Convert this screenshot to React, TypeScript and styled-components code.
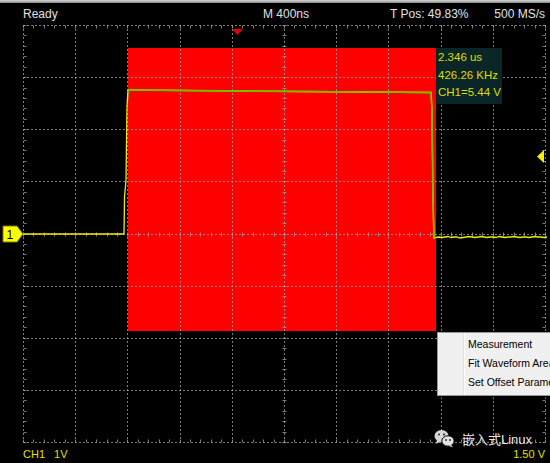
import React from 'react';
import styled, { createGlobalStyle } from 'styled-components';

const GlobalStyle = createGlobalStyle`
  html, body {
    margin: 0;
    padding: 0;
    background: #000;
  }
  body {
    font-family: "Liberation Sans", Arial, sans-serif;
  }
`;

const Screen = styled.div`
  position: relative;
  width: 550px;
  height: 463px;
  overflow: hidden;
  background: #000;
  display: flex;
  flex-direction: column;
`;

const TopEdge = styled.div`
  height: 3px;
  background: linear-gradient(#d8d8d8, #8a8a8a);
`;

const TopBar = styled.div`
  height: 21px;
  display: grid;
  grid-template-columns: 240px 127px 1fr auto;
  align-items: center;
  padding: 0 5px 0 23px;
  color: #e2e2e2;
  font-size: 12px;
  white-space: nowrap;
`;

const Plot = styled.svg`
  display: block;
  width: 550px;
  height: 420px;
  flex: none;
`;

const BottomBar = styled.div`
  height: 19px;
  display: flex;
  align-items: center;
  justify-content: space-between;
  padding: 0 5px 0 23px;
  color: #e0e000;
  font-size: 11px;
`;

const Scale = styled.div`
  display: flex;
  gap: 9px;
`;

const MeasureBox = styled.div`
  position: absolute;
  left: 436px;
  top: 48px;
  width: 64px;
  height: 55px;
  padding: 1px 0 0 2px;
  background: #0b2626;
  color: #dede00;
  font-size: 11.5px;
  line-height: 17.5px;
  white-space: nowrap;
`;

const ContextMenu = styled.div`
  position: absolute;
  left: 437px;
  top: 332px;
  width: 130px;
  height: 62px;
  display: flex;
  background: #f0f0f0;
  border: 1px solid #979797;
  box-shadow: 2px 2px 3px rgba(0, 0, 0, 0.4);
`;

const Gutter = styled.div`
  flex: none;
  width: 25px;
  border-right: 1px solid #e0e0e0;
  box-shadow: 1px 0 0 #fff;
`;

const MenuList = styled.ul`
  list-style: none;
  margin: 0;
  padding: 2px 0 0 4px;
`;

const MenuItem = styled.li`
  height: 19px;
  line-height: 19px;
  font-size: 10.5px;
  color: #000;
  white-space: nowrap;
`;

const Watermark = styled.div`
  position: absolute;
  left: 434px;
  top: 429px;
  display: flex;
  align-items: center;
  gap: 7px;
  color: #e6e6e6;
  font-size: 13px;
  font-family: "Liberation Sans", "Noto Sans CJK SC", sans-serif;
`;

const X0 = 23;
const DX = 52.2;
const Y0 = 1;
const DY = 52.125;
const OFF = 24; // plot top on screen
const px = (v: number) => Math.round(v) + 0.5;
const GRID = 'rgba(155,155,155,0.8)';

function Grid() {
  const items: React.ReactNode[] = [];
  const right = X0 + 10 * DX;
  const bottom = Y0 + 8 * DY;
  for (let i = 0; i <= 10; i++) {
    const x = px(X0 + i * DX);
    items.push(
      <line key={`v${i}`} x1={x} x2={x} y1={Y0} y2={bottom} stroke={GRID} strokeDasharray="2 2" />
    );
  }
  for (let j = 0; j <= 8; j++) {
    const y = px(Y0 + j * DY);
    items.push(
      <line key={`h${j}`} x1={X0} x2={right} y1={y} y2={y} stroke={GRID} strokeDasharray="2 2" />
    );
  }
  for (let k = 0; k <= 50; k++) {
    const x = px(X0 + (k * DX) / 5);
    const cy = px(Y0 + 4 * DY);
    items.push(<line key={`tt${k}`} x1={x} x2={x} y1={px(Y0)} y2={px(Y0) + 3} stroke={GRID} />);
    items.push(<line key={`tb${k}`} x1={x} x2={x} y1={px(bottom) - 3} y2={px(bottom)} stroke={GRID} />);
    items.push(<line key={`tc${k}`} x1={x} x2={x} y1={cy - 2} y2={cy + 2} stroke={GRID} />);
  }
  for (let k = 0; k <= 40; k++) {
    const y = px(Y0 + (k * DY) / 5);
    const cx = px(X0 + 5 * DX);
    items.push(<line key={`tl${k}`} x1={px(X0)} x2={px(X0) + 3} y1={y} y2={y} stroke={GRID} />);
    items.push(<line key={`tr${k}`} x1={px(right) - 3} x2={px(right)} y1={y} y2={y} stroke={GRID} />);
    items.push(<line key={`tm${k}`} x1={cx - 2} x2={cx + 2} y1={y} y2={y} stroke={GRID} />);
  }
  return <g>{items}</g>;
}

// waveform in screen coordinates
const tracePts: [number, number][] = [
  [23, 234], [124, 234], [124.5, 197], [126, 180], [127, 107], [128, 90],
  [300, 91.5], [431, 92.5], [432, 110], [433, 200], [434, 238], [436, 237.5],
];
const noise = [0, 0.5, 0, -0.5, 0.5, 0, 0, 1, 0.5, 0, -0.5, 0, 0.5, 0, -0.5, 0, 0.5, 0, 0, 0.5, -0.5, 0, 0.5, 0, 0, -0.5, 0, 0.5, 0, 0, 0.5, 0, -0.5, 0, 0, 0.5, 0];
for (let i = 0; i < noise.length; i++) {
  tracePts.push([439 + i * 3, 237 + noise[i]]);
}
const tracePath = tracePts.map(([x, y]) => `${x},${y - OFF}`).join(' ');

const RED = { x: 128, y: 48, w: 308, h: 283 };

function WeChatIcon() {
  return (
    <svg width="21" height="19" viewBox="0 0 21 19">
      <ellipse cx="7.5" cy="7" rx="7" ry="6" fill="#d6d6d6" />
      <path d="M3 11 L2 15 L6.5 12.5 Z" fill="#d6d6d6" />
      <circle cx="5" cy="5.5" r="1" fill="#222" />
      <circle cx="10" cy="5.5" r="1" fill="#222" />
      <ellipse cx="14" cy="12" rx="6.2" ry="5.2" fill="#e2e2e2" stroke="#000" strokeWidth="1" />
      <path d="M17 16 L19 18.5 L14.5 16.8 Z" fill="#e2e2e2" />
      <circle cx="12" cy="11" r="0.9" fill="#222" />
      <circle cx="16" cy="11" r="0.9" fill="#222" />
    </svg>
  );
}

export default function App() {
  return (
    <>
      <GlobalStyle />
      <Screen>
        <TopEdge />
        <TopBar>
          <span>Ready</span>
          <span>M 400ns</span>
          <span>T Pos: 49.83%</span>
          <span>500 MS/s</span>
        </TopBar>
        <Plot viewBox="0 0 550 420">
          <defs>
            <clipPath id="redClip">
              <rect x={RED.x} y={RED.y - OFF} width={RED.w} height={RED.h} />
            </clipPath>
          </defs>
          <rect x={RED.x} y={RED.y - OFF} width={RED.w} height={RED.h} fill="#ff0000" />
          <Grid />
          <polyline points={tracePath} fill="none" stroke="#eeee00" strokeWidth="1.3" />
          <polyline
            points={tracePath}
            fill="none"
            stroke="#5cc800"
            strokeWidth="1.6"
            clipPath="url(#redClip)"
          />
          <polygon points="232,5 243,5 237.5,11" fill="#e00000" />
          <polygon points="537,132.5 544,126 544,139" fill="#f0f000" />
          <polygon points="3,202 17,202 23,210 17,218 3,218" fill="#ffff00" stroke="#7a7a00" />
          <text x="6.5" y="214.5" fontSize="12" fill="#000" fontFamily="Liberation Sans, sans-serif">
            1
          </text>
        </Plot>
        <BottomBar>
          <Scale>
            <span>CH1</span>
            <span>1V</span>
          </Scale>
          <span>1.50 V</span>
        </BottomBar>

        <MeasureBox>
          <div>2.346 us</div>
          <div>426.26 KHz</div>
          <div>CH1=5.44 V</div>
        </MeasureBox>

        <Watermark>
          <WeChatIcon />
          <span>嵌入式Linux</span>
        </Watermark>

        <ContextMenu>
          <Gutter />
          <MenuList>
            <MenuItem>Measurement</MenuItem>
            <MenuItem>Fit Waveform Area</MenuItem>
            <MenuItem>Set Offset Parameters</MenuItem>
          </MenuList>
        </ContextMenu>
      </Screen>
    </>
  );
}
